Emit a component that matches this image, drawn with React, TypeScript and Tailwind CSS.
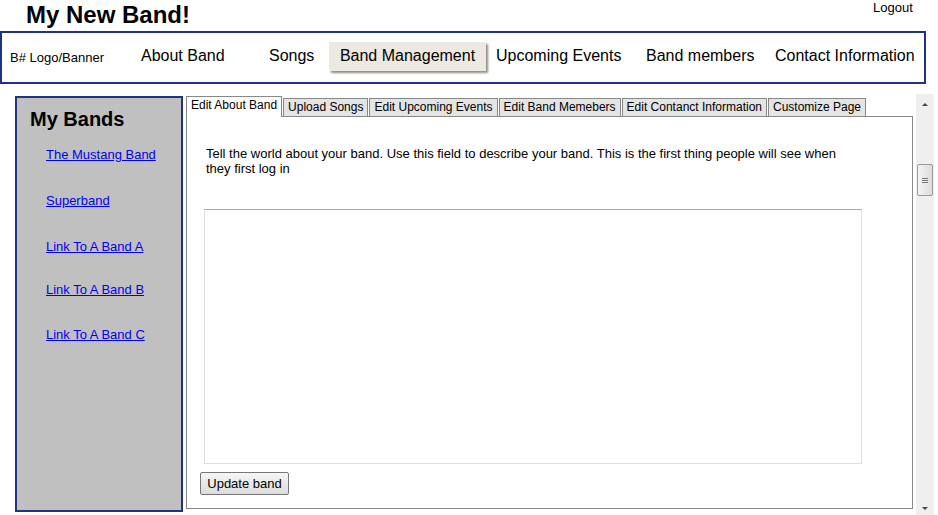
import React from "react";

export default function App() {
  const tabs = [
    "Upload Songs",
    "Edit Upcoming Events",
    "Edit Band Memebers",
    "Edit Contanct Information",
    "Customize Page",
  ];
  const links = [
    { t: "The Mustang Band", mt: "mt-[16px]" },
    { t: "Superband", mt: "mt-[31px]" },
    { t: "Link To A Band A", mt: "mt-[31px]" },
    { t: "Link To A Band B", mt: "mt-[28px]" },
    { t: "Link To A Band C", mt: "mt-[30px]" },
  ];
  return (
    <div className="w-[938px] h-[515px] bg-white overflow-hidden text-black font-['Liberation_Sans',Arial,sans-serif]">
      <div className="relative h-[31px]">
        <div className="absolute left-[26px] top-[1px] text-[24px] leading-[28px] font-bold">My New Band!</div>
        <div className="absolute left-[873px] top-0 text-[13px] leading-[16px]">Logout</div>
      </div>
      <div className="w-[926px] h-[53px] border-2 border-[#1f3580] flex items-center text-[16px] whitespace-nowrap">
        <div className="ml-[8px] w-[131px] text-[13px] mt-[1px]">B# Logo/Banner</div>
        <div className="w-[128px] mb-[3px]">About Band</div>
        <div className="w-[60px] mb-[3px]">Songs</div>
        <div className="w-[157px] h-[29px] mb-[2px] pb-[1px] bg-[#ece9e2] shadow-[2px_2px_2px_rgba(0,0,0,0.45)] flex items-center justify-center">
          Band Management
        </div>
        <div className="ml-[10px] w-[150px] mb-[3px]">Upcoming Events</div>
        <div className="w-[129px] mb-[3px]">Band members</div>
        <div className="mb-[3px]">Contact Information</div>
      </div>
      <div className="flex mt-[12px]">
        <div className="ml-[15px] w-[168px] h-[416px] bg-[#c0c0c0] border-2 border-[#1f3580] flex flex-col">
          <div className="ml-[13px] mt-[9px] text-[20px] leading-[24px] font-bold">My Bands</div>
          {links.map((l) => (
            <a key={l.t} href="#" className={`ml-[29px] ${l.mt} text-[13px] leading-[15px] text-[#0000ee] underline`} onClick={(e) => e.preventDefault()}>
              {l.t}
            </a>
          ))}
        </div>
        <div className="ml-[3px] w-[727px] flex flex-col">
          <div className="flex items-end h-[21px] text-[12px] leading-[14px] whitespace-nowrap">
            <div className="h-[21px] px-[4px] pt-[1px] bg-white border border-b-0 border-[#888] relative z-10">Edit About Band</div>
            {tabs.map((t) => (
              <div key={t} className="h-[19px] px-[4px] pt-[1px] bg-[#e4e4e4] border border-b-0 border-[#888] ml-[1px]">
                {t}
              </div>
            ))}
          </div>
          <div className="h-[393px] -mt-px border border-[#888] bg-white flex flex-col">
            <div className="ml-[19px] mt-[29px] w-[650px] text-[13px] leading-[15px]">
              Tell the world about your band. Use this field to describe your band. This is the first thing people will see when they first log in
            </div>
            <textarea className="ml-[17px] mt-[33px] w-[658px] h-[255px] border border-[#e0e0e0] border-t-[#aaa] border-l-[#ddd] resize-none outline-none" />
            <button className="ml-[13px] mt-[8px] w-[89px] h-[23px] text-[13px] rounded-[2px] border border-[#777] bg-gradient-to-b from-[#f6f6f6] to-[#dcdcdc] flex items-center justify-center">
              Update band
            </button>
          </div>
        </div>
        <div className="ml-[3px] -mt-[2px] w-[18px] h-[421px] bg-[#efefef] relative">
          <div className="absolute left-[6px] top-[9px] w-0 h-0 border-l-[3px] border-r-[3px] border-b-[3px] border-l-transparent border-r-transparent border-b-[#444]" />
          <div className="absolute left-[1px] top-[70px] w-[16px] h-[32px] rounded-[2px] border border-[#999] bg-gradient-to-r from-[#f4f4f4] to-[#dcdcdc] flex flex-col items-center justify-center gap-[1px]">
            <div className="w-[6px] h-px bg-[#777]" />
            <div className="w-[6px] h-px bg-[#777]" />
            <div className="w-[6px] h-px bg-[#777]" />
          </div>
          <div className="absolute left-[6px] bottom-[5px] w-0 h-0 border-l-[3px] border-r-[3px] border-t-[3px] border-l-transparent border-r-transparent border-t-[#444]" />
        </div>
      </div>
    </div>
  );
}
